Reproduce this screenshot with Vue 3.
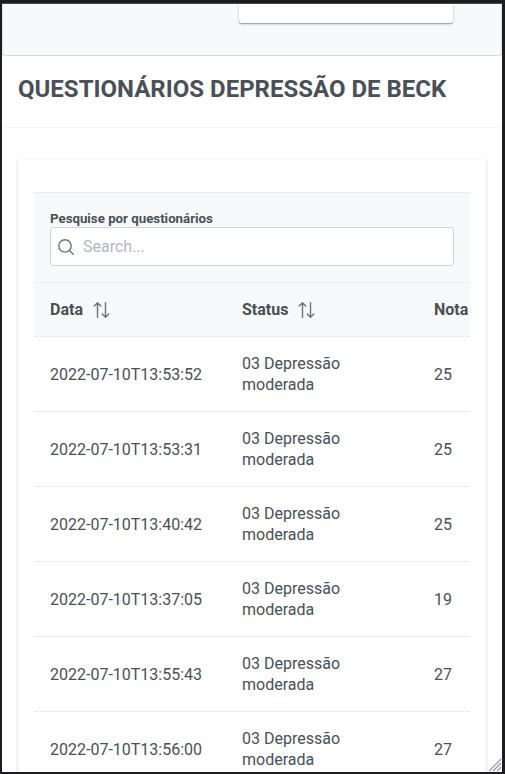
<script setup>
const rows = [
  { date: '2022-07-10T13:53:52', score: 25 },
  { date: '2022-07-10T13:53:31', score: 25 },
  { date: '2022-07-10T13:40:42', score: 25 },
  { date: '2022-07-10T13:37:05', score: 19 },
  { date: '2022-07-10T13:55:43', score: 27 },
  { date: '2022-07-10T13:56:00', score: 27 },
]
const columns = [
  { label: 'Data', sortable: true },
  { label: 'Status', sortable: true },
  { label: 'Nota', sortable: false },
]
</script>

<template>
  <div class="frame">
    <main class="screen">
      <div class="toolbar"><div class="panel"></div></div>
      <header class="heading"><h1>QUESTIONÁRIOS DEPRESSÃO DE BECK</h1></header>
      <section class="card">
        <div class="table">
          <div class="filter">
            <label for="search">Pesquise por questionários</label>
            <div class="field">
              <svg class="search-icon" viewBox="0 0 16 16" fill="none" stroke="#6c757d" stroke-width="1.4" stroke-linecap="round">
                <circle cx="7" cy="6.9" r="6.2" />
                <path d="M11.5 11.4 15.5 15.4" />
              </svg>
              <input id="search" type="text" placeholder="Search..." />
            </div>
          </div>
          <div class="row head">
            <div v-for="c in columns" :key="c.label" class="cell">
              <span>{{ c.label }}</span>
              <svg v-if="c.sortable" class="sort-icon" viewBox="0 0 17 16" fill="none" stroke="#6c757d" stroke-width="1.4" stroke-linecap="round" stroke-linejoin="round">
                <path d="M4.5 15.4V.9M1.2 4 4.5.8 7.8 4M12.5.6v14.5M9.2 12l3.3 3.2 3.3-3.2" />
              </svg>
            </div>
          </div>
          <div v-for="r in rows" :key="r.date" class="row body">
            <div class="cell">{{ r.date }}</div>
            <div class="cell">03 Depressão moderada</div>
            <div class="cell">{{ r.score }}</div>
          </div>
        </div>
      </section>
      <svg class="grip" viewBox="0 0 14 14" stroke="#999" stroke-width="1.2">
        <path d="M1 13 13 1M5 13 13 5M9 13 13 9" />
      </svg>
    </main>
  </div>
</template>

<style>
body { margin: 0; overflow: hidden; }
</style>

<style scoped>
* { box-sizing: border-box; }
.frame {
  height: 774px;
  padding: 3px 3px 2px 2px;
  background: #1d1d20;
  font-family: Roboto, sans-serif;
  font-size: 16px;
  color: #495057;
}
.screen {
  position: relative;
  height: 769px;
  overflow: hidden;
  background: #fff;
  border-top: 1px solid #47484b;
}
.toolbar {
  display: flex;
  justify-content: flex-end;
  height: 52px;
  padding-right: 48px;
  background: #f8f9fa;
  border: 1px solid #dee2e6;
  border-top: 0;
  border-bottom-color: #d5d9dd;
  border-radius: 0 0 3px 3px;
}
.panel {
  width: 214px;
  height: 19px;
  background: #fff;
  border-radius: 0 0 3px 3px;
  box-shadow: 0 1px 1px rgba(0, 0, 0, .24), 0 1px 3px rgba(0, 0, 0, .22);
}
.heading {
  height: 71px;
  padding: 16px;
  border-radius: 3px;
  box-shadow: 0 1px 0 #f5f5f5;
}
h1 {
  margin: 0;
  font-size: 24px;
  line-height: 34px;
  font-weight: 700;
  white-space: nowrap;
}
.card {
  width: 468px;
  height: 680px;
  margin: 33px 0 0 16px;
  padding: 32px 16px 0;
  border-radius: 3px;
  box-shadow: 0 2px 1px -1px rgba(0, 0, 0, .2), 0 1px 1px rgba(0, 0, 0, .14), 0 1px 3px rgba(0, 0, 0, .2);
}
.table { overflow: hidden; }
.filter {
  height: 90px;
  padding: 18px 16px 0;
  background: #f8f9fa;
  border-top: 1px solid #e9ecef;
}
label {
  display: block;
  font-size: 13.28px;
  line-height: 16px;
  font-weight: 700;
}
.field {
  display: flex;
  align-items: center;
  height: 39px;
  padding: 0 8px 0 7px;
  gap: 9px;
  background: #fff;
  border: 1px solid #ced4da;
  border-radius: 3px;
}
.search-icon { width: 16px; height: 16px; flex: none; }
input {
  flex: 1;
  min-width: 0;
  padding: 0;
  border: 0;
  outline: 0;
  background: none;
  font: inherit;
  color: inherit;
}
input::placeholder { color: #b3b7bc; opacity: 1; }
.row {
  display: grid;
  grid-template-columns: 192px 192px 192px;
  width: 576px;
  border-bottom: 1px solid #e9ecef;
}
.head {
  height: 55px;
  background: #f8f9fa;
  border-top: 1px solid #e9ecef;
  font-weight: 700;
}
.body { height: 75px; line-height: 21px; }
.cell {
  display: flex;
  align-items: center;
  padding: 0 48px 0 16px;
}
.body .cell:first-child { padding-right: 16px; }
.sort-icon { width: 17px; height: 16px; margin-left: 10px; flex: none; }
.grip {
  position: absolute;
  right: 0;
  bottom: 0;
  width: 14px;
  height: 14px;
}
</style>
